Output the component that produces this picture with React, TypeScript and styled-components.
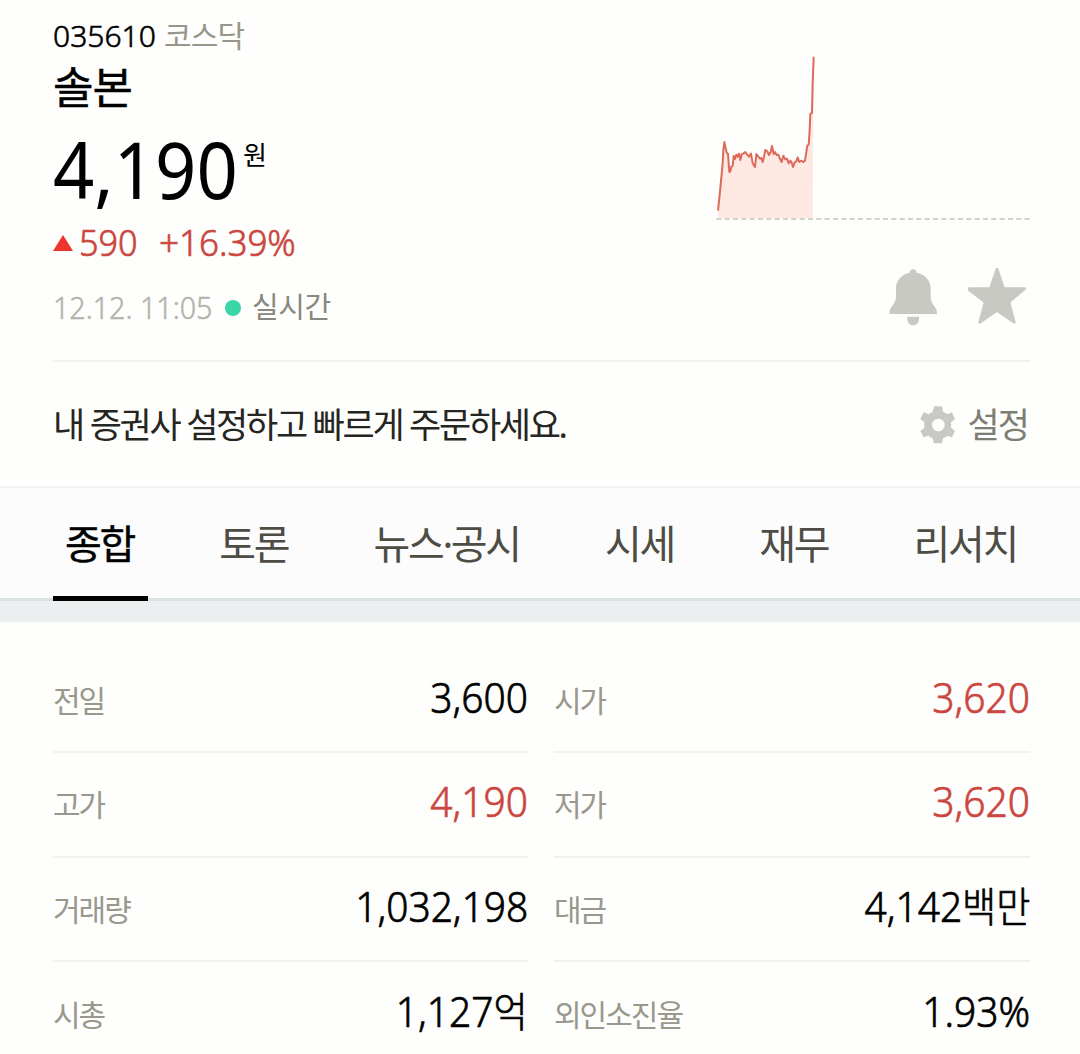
import React from 'react';
import styled, { createGlobalStyle } from 'styled-components';

const GlobalStyle = createGlobalStyle`
  * { box-sizing: border-box; }
  body {
    margin: 0;
    background: #fefefc;
    font-family: 'Noto Sans', 'Noto Sans CJK KR', sans-serif;
  }
`;

const Page = styled.main`
  width: 1080px;
  height: 1054px;
  overflow: hidden;
  background: #fefefc;
  color: #000;
  white-space: nowrap;
`;

const Header = styled.header`
  display: flex;
  justify-content: space-between;
  height: 362px;
  margin: 0 50px 0 53px;
  padding-top: 14px;
  border-bottom: 2px solid #f1f1ef;
`;

const Summary = styled.div`
  display: flex;
  flex-direction: column;
  padding-top: 2px;
`;

const CodeRow = styled.div`
  display: flex;
  font-size: 30px;
  line-height: 40px;
`;

const Code = styled.span`
  width: 111px;
  font-weight: 300;
  -webkit-text-stroke: 0.6px;
`;

const Market = styled.span`
  color: #96968a;
  letter-spacing: -0.8px;
`;

const Name = styled.h1`
  margin: 1px 0 0;
  font-size: 44px;
  font-weight: 400;
  line-height: 60px;
  letter-spacing: -1px;
  -webkit-text-stroke: 0.4px;
`;

const PriceRow = styled.div`
  display: flex;
  margin-top: 7px;
  height: 90px;
`;

const Price = styled.strong`
  width: 190px;
  font-size: 79px;
  font-weight: 400;
  line-height: 90px;
  transform: scaleX(0.915);
  transform-origin: left;
`;

const Unit = styled.span`
  margin-top: 13px;
  font-size: 26px;
  line-height: 36px;
`;

const ChangeRow = styled.div`
  display: flex;
  align-items: center;
  margin-top: 3px;
  font-size: 37px;
  font-weight: 300;
  line-height: 50px;
  color: #cb4640;
  -webkit-text-stroke: 0.7px;
`;

const UpArrow = styled.i`
  width: 0;
  height: 0;
  margin: 2px 6px 0 0;
  border: solid transparent;
  border-width: 0 10.5px 16px;
  border-bottom-color: #ee342e;
`;

const Amount = styled.span`
  width: 80px;
  transform: scaleX(0.925);
  transform-origin: left;
`;

const Rate = styled.span`
  transform: scaleX(0.945);
  transform-origin: left;
`;

const TimeRow = styled.div`
  display: flex;
  align-items: center;
  margin-top: 18px;
  font-size: 31px;
  line-height: 44px;
  color: #b4b4a9;
`;

const Time = styled.span`
  width: 172px;
  font-weight: 300;
  transform: scaleX(0.925);
  transform-origin: left;
  -webkit-text-stroke: 0.5px;
`;

const LiveDot = styled.i`
  width: 16px;
  height: 16px;
  margin: 1px 11px 0 0;
  border-radius: 50%;
  background: #3ad6a8;
`;

const Live = styled.span`
  font-size: 29px;
  letter-spacing: -0.4px;
  color: #88887d;
`;

const Aside = styled.div`
  display: flex;
  flex-direction: column;
  align-items: flex-end;
  padding-top: 36px;
`;

const Actions = styled.div`
  display: flex;
  gap: 29px;
  margin: 45px 3px 0 0;
`;

const Broker = styled.section`
  display: flex;
  align-items: center;
  justify-content: space-between;
  height: 124px;
  padding: 2px 52px 0 53px;
  font-size: 35px;
  line-height: 50px;
`;

const BrokerText = styled.p`
  margin: 0;
  color: #252522;
  letter-spacing: -2.3px;
`;

const Settings = styled.button`
  display: flex;
  align-items: center;
  gap: 12px;
  padding: 0;
  border: 0;
  background: none;
  font: inherit;
  letter-spacing: -2px;
  color: #7d7d74;
`;

const Tabs = styled.nav`
  display: flex;
  justify-content: space-between;
  height: 136px;
  padding: 0 49px 0 53px;
  border-top: 2px solid #f2f5f5;
  background: linear-gradient(#fcfcfd 0 110px, #dbe2e3 110px 113px, #ebefef 113px);
`;

const Tab = styled.a<{ $active?: boolean }>`
  height: 113px;
  padding: 0 14px 0 12px;
  border-bottom: ${(p) => (p.$active ? '5px solid #000' : '0')};
  font-size: 40px;
  line-height: 112px;
  letter-spacing: -2.3px;
  color: ${(p) => (p.$active ? '#000' : '#4d4d45')};
  -webkit-text-stroke: ${(p) => (p.$active ? '0.4px' : '0')};
`;

const Quotes = styled.section`
  display: grid;
  grid-template-columns: 475px 476px;
  column-gap: 26px;
  padding: 26px 50px 0 53px;
`;

const Cell = styled.div`
  display: flex;
  justify-content: space-between;
  height: 104.8px;
  padding-top: 20.5px;
  border-bottom: 2px solid #f1f1ef;
  line-height: 56px;
`;

const Label = styled.span`
  padding-top: 4px;
  font-size: 30px;
  letter-spacing: -2px;
  color: #98988c;
`;

const Value = styled.span<{ $up?: boolean }>`
  font-size: 43px;
  font-weight: 300;
  color: ${(p) => (p.$up ? '#cb4640' : '#000')};
  transform: scaleX(0.905);
  transform-origin: right;
  -webkit-text-stroke: 0.7px;
`;

const Suffix = styled.span`
  font-size: 41px;
`;

const QUOTES: { label: string; value: string; unit?: string; up?: boolean }[] = [
  { label: '전일', value: '3,600' },
  { label: '시가', value: '3,620', up: true },
  { label: '고가', value: '4,190', up: true },
  { label: '저가', value: '3,620', up: true },
  { label: '거래량', value: '1,032,198' },
  { label: '대금', value: '4,142', unit: '백만' },
  { label: '시총', value: '1,127', unit: '억' },
  { label: '외인소진율', value: '1.93%' },
];

const TABS = ['종합', '토론', '뉴스·공시', '시세', '재무', '리서치'];

const TREND =
  '54,512 60,455 68,370 70,330 73,306 76,320 80,338 84,342 88,396 91,394 94,380 98,378 101,348 105,357 109,344 113,350 117,341 121,360 125,343 131,340 136,336 141,343 147,350 153,341 158,370 165,381 169,342 175,350 180,356 184,354 188,366 192,350 196,330 202,334 207,345 212,336 216,318 221,342 225,336 230,345 235,344 240,357 245,366 250,347 256,358 261,356 266,370 271,362 275,368 279,381 284,367 289,364 293,352 298,366 304,362 310,366 315,362 320,330 322,316 326,314 329,270 331,221 336,219 338,130 341,50';

const Trend = () => (
  <svg width="314" height="172" viewBox="48 30 942 516">
    <polygon points={`${TREND} 338,535 54,535`} fill="#fde8e2" />
    <polyline points={TREND} fill="none" stroke="#dd6a5b" strokeWidth="6" strokeLinejoin="round" />
    <path d="M49 537H990" stroke="#d3d3c9" strokeWidth="6" strokeDasharray="15 10" />
  </svg>
);

const Bell = () => (
  <svg width="49" height="60" viewBox="57 50 147 180" fill="#c8c9c3">
    <path d="M119 67C119 61 123 57 129 57S140 61 140 67C164 72 182 89 182 115V137C182 157 190 162 198 175Q201 181 201 191H58Q58 181 61 175C69 162 78 157 78 137V115C78 89 95 72 119 67Z" />
    <path d="M112 199H147V206C147 217 140 225 129.500 225S112 217 112 206Z" />
  </svg>
);

const Star = () => (
  <svg width="60" height="60" viewBox="291 50 180 180" fill="#c8c9c3">
    <path
      d="M381 56L401 115H464L417 155L433 216L381 180L329 216L345 155L298 119V115H361Z"
      stroke="#c8c9c3"
      strokeWidth="8"
      strokeLinejoin="round"
    />
  </svg>
);

const Gear = () => (
  <svg width="37" height="40" viewBox="147 465 111 120" fill="#c8c9c3">
    <path
      fillRule="evenodd"
      d="M192 469H216L219 485Q226 488 232 493L246 487L255 507L243 517Q244 525 243 533L255 543L246 562L232 557Q226 562 219 565L216 580H192L188 565Q181 562 176 557L161 562L151 543L163 533Q162 525 163 517L151 507L161 487L176 493Q181 488 188 485ZM205 506A19 19 0 1 0 205 544A19 19 0 1 0 205 506Z"
    />
  </svg>
);

export default function App() {
  return (
    <Page>
      <GlobalStyle />
      <Header>
        <Summary>
          <CodeRow>
            <Code>035610</Code>
            <Market>코스닥</Market>
          </CodeRow>
          <Name>솔본</Name>
          <PriceRow>
            <Price>4,190</Price>
            <Unit>원</Unit>
          </PriceRow>
          <ChangeRow>
            <UpArrow />
            <Amount>590</Amount>
            <Rate>+16.39%</Rate>
          </ChangeRow>
          <TimeRow>
            <Time>12.12. 11:05</Time>
            <LiveDot />
            <Live>실시간</Live>
          </TimeRow>
        </Summary>
        <Aside>
          <Trend />
          <Actions>
            <Bell />
            <Star />
          </Actions>
        </Aside>
      </Header>
      <Broker>
        <BrokerText>내 증권사 설정하고 빠르게 주문하세요.</BrokerText>
        <Settings>
          <Gear />
          설정
        </Settings>
      </Broker>
      <Tabs>
        {TABS.map((tab, i) => (
          <Tab key={tab} $active={i === 0}>
            {tab}
          </Tab>
        ))}
      </Tabs>
      <Quotes>
        {QUOTES.map((q) => (
          <Cell key={q.label}>
            <Label>{q.label}</Label>
            <Value $up={q.up}>
              {q.value}
              {q.unit && <Suffix>{q.unit}</Suffix>}
            </Value>
          </Cell>
        ))}
      </Quotes>
    </Page>
  );
}
